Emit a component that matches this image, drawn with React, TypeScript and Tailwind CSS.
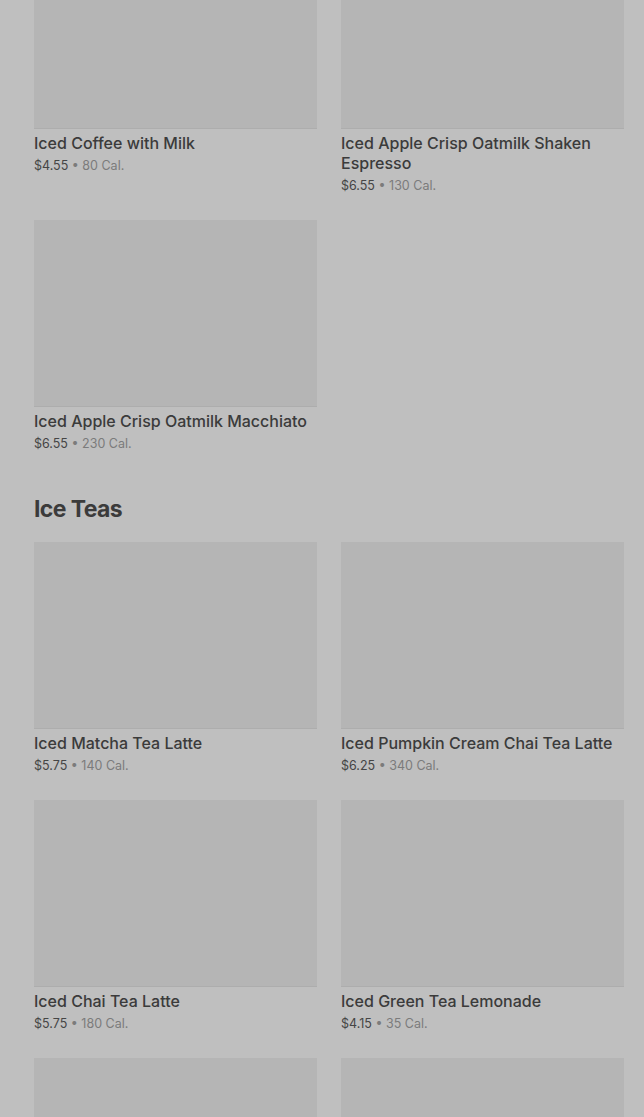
import React from "react";

type Item = { name: string; price: string; cal: string };

const row1: Item[] = [
  { name: "Iced Coffee with Milk", price: "$4.55", cal: "80 Cal." },
  { name: "Iced Apple Crisp Oatmilk Shaken Espresso", price: "$6.55", cal: "130 Cal." },
  { name: "Iced Apple Crisp Oatmilk Macchiato", price: "$6.55", cal: "230 Cal." },
];

const teas: Item[] = [
  { name: "Iced Matcha Tea Latte", price: "$5.75", cal: "140 Cal." },
  { name: "Iced Pumpkin Cream Chai Tea Latte", price: "$6.25", cal: "340 Cal." },
  { name: "Iced Chai Tea Latte", price: "$5.75", cal: "180 Cal." },
  { name: "Iced Green Tea Lemonade", price: "$4.15", cal: "35 Cal." },
  { name: "", price: "", cal: "" },
  { name: "", price: "", cal: "" },
];

function Card({ item }: { item: Item }) {
  return (
    <div className="flex flex-col">
      <div className="h-[187px] w-full bg-[#b5b5b5] border-b border-[#adadad]" />
      {item.name && (
        <>
          <div className="mt-1 text-[16px] leading-[20px] font-medium text-[#3b3b3b]">{item.name}</div>
          <div className="mt-[3px] text-[12.5px] leading-[20px] text-[#7b7b7b]">
            <span className="text-[#454545]">{item.price}</span> • {item.cal}
          </div>
        </>
      )}
    </div>
  );
}

export default function App() {
  return (
    <div
      className="w-[644px] h-[1117px] overflow-hidden bg-[#bfbfbf]"
      style={{ fontFamily: "Inter, 'Noto Sans', sans-serif" }}
    >
      <div className="mt-[-58px] pl-[34px] pr-[20px]">
        <div className="grid grid-cols-2 gap-x-[24px] gap-y-[24px]">
          {row1.map((it, i) => (
            <Card key={i} item={it} />
          ))}
        </div>
        <h2 className="mt-[39px] mb-[17px] text-[23px] leading-[32px] font-bold tracking-[-0.6px] text-[#3b3b3b]">Ice Teas</h2>
        <div className="grid grid-cols-2 gap-x-[24px] gap-y-[24px]">
          {teas.map((it, i) => (
            <Card key={i} item={it} />
          ))}
        </div>
      </div>
    </div>
  );
}
